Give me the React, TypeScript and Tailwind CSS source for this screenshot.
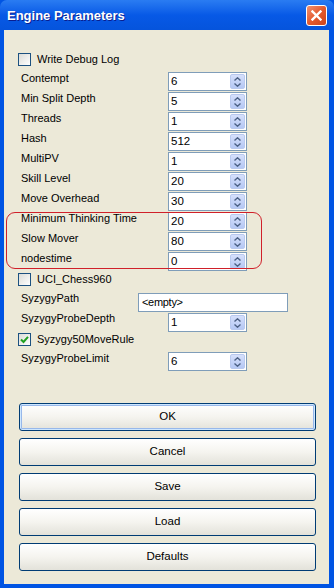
import React from "react";

type Row =
  | { kind: "check"; label: string; checked: boolean }
  | { kind: "spin"; label: string; value: string }
  | { kind: "text"; label: string; value: string };

const rows: Row[] = [
  { kind: "check", label: "Write Debug Log", checked: false },
  { kind: "spin", label: "Contempt", value: "6" },
  { kind: "spin", label: "Min Split Depth", value: "5" },
  { kind: "spin", label: "Threads", value: "1" },
  { kind: "spin", label: "Hash", value: "512" },
  { kind: "spin", label: "MultiPV", value: "1" },
  { kind: "spin", label: "Skill Level", value: "20" },
  { kind: "spin", label: "Move Overhead", value: "30" },
  { kind: "spin", label: "Minimum Thinking Time", value: "20" },
  { kind: "spin", label: "Slow Mover", value: "80" },
  { kind: "spin", label: "nodestime", value: "0" },
  { kind: "check", label: "UCI_Chess960", checked: false },
  { kind: "text", label: "SyzygyPath", value: "<empty>" },
  { kind: "spin", label: "SyzygyProbeDepth", value: "1" },
  { kind: "check", label: "Syzygy50MoveRule", checked: true },
  { kind: "spin", label: "SyzygyProbeLimit", value: "6" },
];

const buttons = ["OK", "Cancel", "Save", "Load", "Defaults"];

function CheckBox({ checked }: { checked: boolean }) {
  return (
    <div className="w-[13px] h-[13px] shrink-0 border border-[#1c5180] bg-gradient-to-br from-[#dcdcd7] to-white flex items-center justify-center">
      {checked && (
        <svg width="9" height="9" viewBox="0 0 9 9">
          <path d="M1 4.5 L3.5 7 L8 1.8" stroke="#21a121" strokeWidth="2" fill="none" />
        </svg>
      )}
    </div>
  );
}

function SpinBox({ value, top }: { value: string; top: string }) {
  return (
    <div className={"w-[79px] h-[19px] border border-[#7f9db9] bg-white flex items-stretch " + top}>
      <div className="flex-1 pl-[2px] text-[11.5px] leading-[17px] text-black">{value}</div>
      <div className="w-[15px] my-[1px] mr-[1px] rounded-[2px] bg-gradient-to-b from-[#d6e0fb] to-[#b5c8f5] border border-[#b9c9ef] flex flex-col items-center justify-center gap-[2px]">
        <svg width="7" height="4" viewBox="0 0 7 4">
          <path d="M0.5 3.5 L3.5 0.8 L6.5 3.5" stroke="#4d6185" strokeWidth="1.4" fill="none" />
        </svg>
        <svg width="7" height="4" viewBox="0 0 7 4">
          <path d="M0.5 0.5 L3.5 3.2 L6.5 0.5" stroke="#4d6185" strokeWidth="1.4" fill="none" />
        </svg>
      </div>
    </div>
  );
}

export default function App() {
  return (
    <div
      className="w-[334px] h-[588px] flex flex-col bg-[#0054e3] overflow-hidden"
      style={{ fontFamily: '"Liberation Sans", Arial, sans-serif' }}
    >
      {/* title bar */}
      <div className="h-[30px] shrink-0 flex items-center justify-between pl-[7px] pr-[7px] rounded-t-[7px] bg-gradient-to-b from-[#2a7cf2] via-[#0759e6] to-[#0554dc]">
        <span className="text-white font-bold text-[13px] pt-[1px] [text-shadow:1px_1px_0_#0a1e8f]">
          Engine Parameters
        </span>
        <div className="w-[21px] h-[21px] rounded-[3px] border border-white bg-gradient-to-br from-[#f0906e] via-[#e45a2e] to-[#cc441c] flex items-center justify-center">
          <svg width="11" height="11" viewBox="0 0 11 11">
            <path d="M1.5 1.5 L9.5 9.5 M9.5 1.5 L1.5 9.5" stroke="white" strokeWidth="2.4" strokeLinecap="square" />
          </svg>
        </div>
      </div>

      {/* client area */}
      <div className="relative flex-1 ml-[4px] mr-[5px] mb-[4px] bg-[#ece9d8] text-[11px] text-black">
        <div className="pt-[20px]">
          {rows.map((row) => (
            <div key={row.label} className="h-5 flex items-start">
              {row.kind === "check" ? (
                <div className="flex items-center h-5 pl-[14px] gap-[6px] -mt-[1px]">
                  <CheckBox checked={row.checked} />
                  <span className="leading-4 whitespace-nowrap">{row.label}</span>
                </div>
              ) : (
                <>
                  <span className="w-[134px] pl-[17px] leading-4 shrink-0 whitespace-nowrap">{row.label}</span>
                  {row.kind === "spin" ? (
                    <div className="ml-[30px]">
                      <SpinBox value={row.value} top={row.label === "SyzygyProbeDepth" ? "mt-[3px]" : "mt-[2px]"} />
                    </div>
                  ) : (
                    <div className="w-[150px] h-[19px] mt-[3px] border border-[#7f9db9] bg-white pl-[3px] text-[11px] leading-[17px] tracking-[-0.3px]">
                      {row.value}
                    </div>
                  )}
                </>
              )}
            </div>
          ))}
        </div>

        {/* highlighted group */}
        <div className="absolute left-[2px] top-[182px] w-[256px] h-[57px] border border-[#d0202a] rounded-[9px] pointer-events-none" />

        <div className="mt-[33px] flex flex-col gap-[7px] pl-[15px] pr-[13px]">
          {buttons.map((b, i) => (
            <div
              key={b}
              className={
                "h-[28px] rounded-[3px] border border-[#003c74] bg-gradient-to-b from-white via-[#f5f4ef] to-[#e3e2da] flex items-center justify-center text-[11.5px] " +
                (i === 0 ? "shadow-[inset_0_0_0_1px_#cee7ff,inset_0_0_0_2px_#98b8ea]" : "")
              }
            >
              {b}
            </div>
          ))}
        </div>
      </div>
    </div>
  );
}
